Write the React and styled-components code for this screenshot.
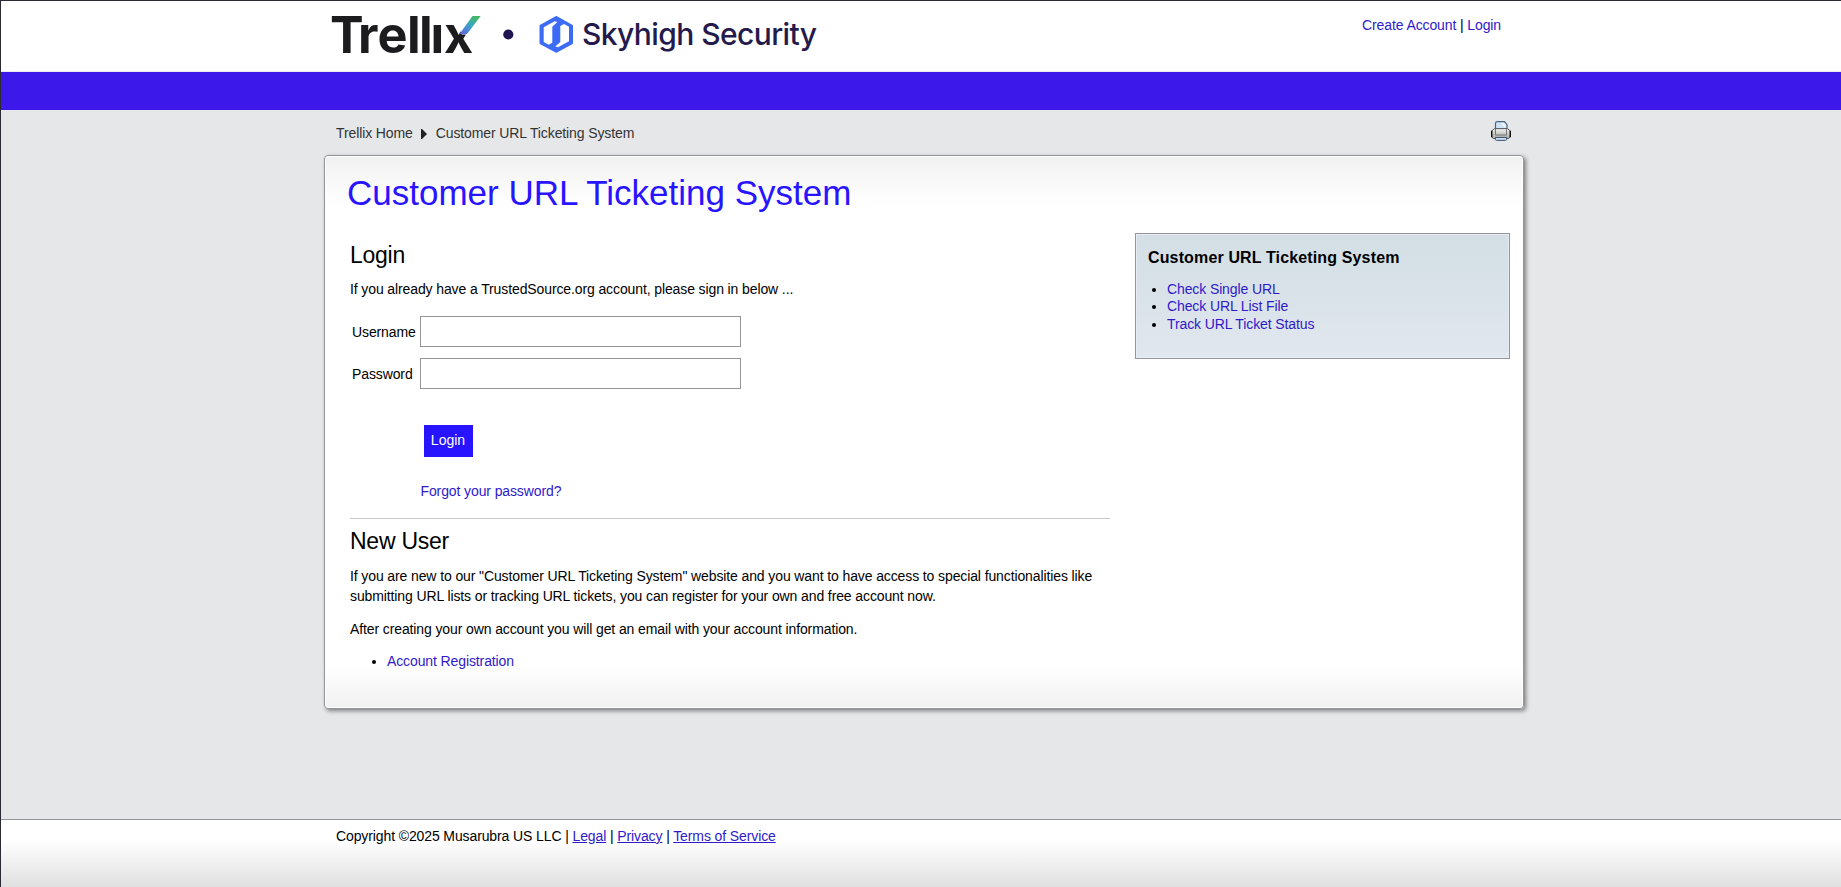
import React from "react";
import styled, { createGlobalStyle } from "styled-components";

const Global = createGlobalStyle`
  html, body { margin: 0; }
  *, *::before, *::after { box-sizing: border-box; }
  body { font-family: "Liberation Sans", Arial, sans-serif; font-size: 14px; line-height: 20px; letter-spacing: -0.112px; color: #000; background: #e6e7e8; }
`;

const Page = styled.div`
  width: 100%;
  height: 887px;
  display: flex;
  flex-direction: column;
  overflow: hidden;
  border-top: 1px solid #2b2a33;
  border-left: 1px solid #2b2a33;
  background: #e6e7e8;
`;

const Header = styled.header`
  height: 71px;
  background: #fff;
  border-bottom: 1px solid #ecebf5;
  flex: none;
`;

const Container = styled.div`
  width: 1200px;
  margin-left: 323px;
  display: flex;
  justify-content: space-between;
  align-items: flex-start;
`;

const Brand = styled.svg`
  overflow: visible;
  letter-spacing: 0;
`;

const Account = styled.nav`
  margin: 14px 23px 0 0;
  white-space: pre;
`;

const Link = styled.a`
  color: #2f1ac9;
  text-decoration: ${(p) => (p.$underline ? "underline" : "none")};
  cursor: pointer;
`;

const NavBar = styled.div`
  height: 38px;
  flex: none;
  background: #3d18eb;
`;

const Crumbs = styled.div`
  height: 45px;
  width: 100%;
  display: flex;
  align-items: flex-start;
  padding: 13px 13px 0 12px;
  color: #333;
`;

const Arrow = styled.svg`
  flex: none;
  margin: 5.5px 9px 0 8px;
`;

const Printer = styled.svg`
  margin: -2px 0 0 auto;
`;

const Panel = styled.main`
  width: 1200px;
  height: 554px;
  margin-left: 323px;
  flex: none;
  border: 1px solid #939598;
  border-radius: 4px;
  box-shadow: inset 0 0 0 1px #fff, 2px 2px 4px rgba(0, 0, 0, 0.45);
  background: linear-gradient(#f1f1f1, #fff 50px, #fff calc(100% - 42px), #f1f1f1);
  padding: 15px 13px 0 22px;
`;

const Title = styled.h1`
  margin: 0;
  font-size: 35px;
  line-height: 44px;
  font-weight: 400;
  letter-spacing: 0;
  color: #2814ff;
`;

const Columns = styled.div`
  display: flex;
  justify-content: space-between;
  align-items: flex-start;
  padding: 18px 0 0 3px;
`;

const Main = styled.section`
  width: 760px;
  padding-top: 8px;
`;

const Heading = styled.h2`
  margin: 0;
  font-size: 23px;
  line-height: 28px;
  font-weight: 400;
  letter-spacing: -0.25px;
`;

const Text = styled.p`
  margin: ${(p) => p.$top}px 0 0;
`;

const Field = styled.label`
  display: flex;
  align-items: center;
  padding-left: 2px;
  margin-top: ${(p) => p.$top}px;
`;

const FieldName = styled.span`
  width: 68px;
`;

const Input = styled.input`
  width: 321px;
  height: 31px;
  border: 1px solid #939598;
  background: #fff;
  padding: 0 6px;
`;

const Button = styled.button`
  display: block;
  width: 49px;
  height: 32px;
  margin: 36px 0 0 74px;
  padding: 0 1px 2px 0;
  border: 0;
  background: #2814ff;
  color: #fff;
  font: inherit;
`;

const Forgot = styled.div`
  margin: 24px 0 0 70.5px;
`;

const Rule = styled.hr`
  height: 1px;
  border: 0;
  background: #c8c8c8;
  margin: 17px 0 8px;
`;

const List = styled.ul`
  margin: ${(p) => p.$top}px 0 0;
  padding-left: ${(p) => p.$indent}px;
  line-height: ${(p) => p.$line}px;
`;

const Aside = styled.aside`
  width: 375px;
  height: 126px;
  border: 1px solid #939598;
  box-shadow: inset 0 0 0 1px #e6ecf1;
  background: linear-gradient(#d3dee5, #e1e7ee);
  padding: 14px 12px 0 12px;
`;

const AsideTitle = styled.h3`
  margin: 0;
  font-size: 16px;
  line-height: 20px;
  letter-spacing: 0.14px;
`;

const Footer = styled.footer`
  height: 68px;
  margin-top: auto;
  flex: none;
  border-top: 1px solid #939598;
  background: linear-gradient(#fff 20px, #e0e0e0);
  padding: 6px 0 0 335px;
  white-space: pre;
`;

function Logo() {
  return (
    <Brand width="500" height="60" viewBox="324 1 500 60">
      <defs>
        <linearGradient id="slash" x1="0" y1="1" x2="1" y2="0">
          <stop offset="0.1" stopColor="#5a6fe0" />
          <stop offset="0.5" stopColor="#3aa6c4" />
          <stop offset="0.85" stopColor="#45b867" />
        </linearGradient>
      </defs>
      <text x="330 358 377.5 407 419 430.5 444" y="52.6" fontFamily="Inter, sans-serif" fontWeight="700" fontSize="50.4" fill="#1c1c1e">Trellıx</text>
      <path d="M455.8 22H480V34.5H461.8Z" fill="#fff" />
      <path d="M472.5 16H480.7L467 34H459.5Z" fill="url(#slash)" />
      <circle cx="508.3" cy="34.5" r="5.1" fill="#211552" />
      <path d="M556.3 17.5L571.5 26V43L556.3 51.3L541 43V26Z" fill="#3c6cf5" stroke="#3c6cf5" strokeWidth="3" strokeLinejoin="round" />
      <path d="M543.7 27.3L554.7 21.3L557.3 22L552.3 26.7V42.7L548.7 44.7L543.7 42Z" fill="#fff" />
      <path d="M569 41.3L558 47.3L555.3 46.6L560.3 42V26L564 24L569 26.7Z" fill="#fff" />
      <text x="582" y="45" textLength="235" fontFamily="Inter, sans-serif" fontWeight="500" fontSize="30" fill="#241a4c">Skyhigh Security</text>
    </Brand>
  );
}

function PrintIcon() {
  return (
    <Printer width="20" height="20" viewBox="0 0 20 20">
      <defs>
        <linearGradient id="body" x1="0" y1="0" x2="0" y2="1">
          <stop offset="0" stopColor="#f2f2f0" />
          <stop offset="1" stopColor="#a3a39f" />
        </linearGradient>
      </defs>
      <path d="M4.5 9V2.5Q4.5.6 6 .6H13.5L16 3.6V9Z" fill="#cfe3f7" stroke="#4a6480" strokeWidth="1.2" />
      <path d="M10 2.5L14.5 7.5V4L12.5 2Z" fill="#f3f9ff" />
      <path d="M3.5 7.6H16.5L19.3 10V16L17.5 17.6H2.5L.7 16V10Z" fill="url(#body)" stroke="#55565a" />
      <path d="M.7 9.8V16.2M19.3 9.8V16.2" stroke="#111" strokeWidth="1.4" />
      <path d="M4.5 8V14H15.5V8" fill="none" stroke="#777" />
      <path d="M4.5 16.5H15.5V18.4Q15.5 19.4 14.5 19.4H5.5Q4.5 19.4 4.5 18.4Z" fill="#c8ddf2" stroke="#3f5870" />
    </Printer>
  );
}

export default function App() {
  return (
    <>
      <Global />
      <Page>
        <Header>
          <Container>
            <Logo />
            <Account><Link>Create Account</Link> | <Link>Login</Link></Account>
          </Container>
        </Header>
        <NavBar />
        <Container>
          <Crumbs>
            <span>Trellix Home</span>
            <Arrow width="6" height="10" viewBox="0 0 6 10"><path d="M0 0H1L6 5L1 10H0Z" fill="#222" /></Arrow>
            <span>Customer URL Ticketing System</span>
            <PrintIcon />
          </Crumbs>
        </Container>
        <Panel>
          <Title>Customer URL Ticketing System</Title>
          <Columns>
            <Main>
              <Heading>Login</Heading>
              <Text $top={10}>If you already have a TrustedSource.org account, please sign in below ...</Text>
              <Field $top={17}><FieldName>Username</FieldName><Input /></Field>
              <Field $top={11}><FieldName>Password</FieldName><Input type="password" /></Field>
              <Button>Login</Button>
              <Forgot><Link>Forgot your password?</Link></Forgot>
              <Rule />
              <Heading>New User</Heading>
              <Text $top={11}>If you are new to our "Customer URL Ticketing System" website and you want to have access to special functionalities like submitting URL lists or tracking URL tickets, you can register for your own and free account now.</Text>
              <Text $top={13}>After creating your own account you will get an email with your account information.</Text>
              <List $top={12} $indent={37} $line={20}><li><Link>Account Registration</Link></li></List>
            </Main>
            <Aside>
              <AsideTitle>Customer URL Ticketing System</AsideTitle>
              <List $top={12.8} $indent={19} $line={17.5}>
                <li><Link>Check Single URL</Link></li>
                <li><Link>Check URL List File</Link></li>
                <li><Link>Track URL Ticket Status</Link></li>
              </List>
            </Aside>
          </Columns>
        </Panel>
        <Footer>Copyright ©2025 Musarubra US LLC | <Link $underline>Legal</Link> | <Link $underline>Privacy</Link> | <Link $underline>Terms of Service</Link></Footer>
      </Page>
    </>
  );
}
